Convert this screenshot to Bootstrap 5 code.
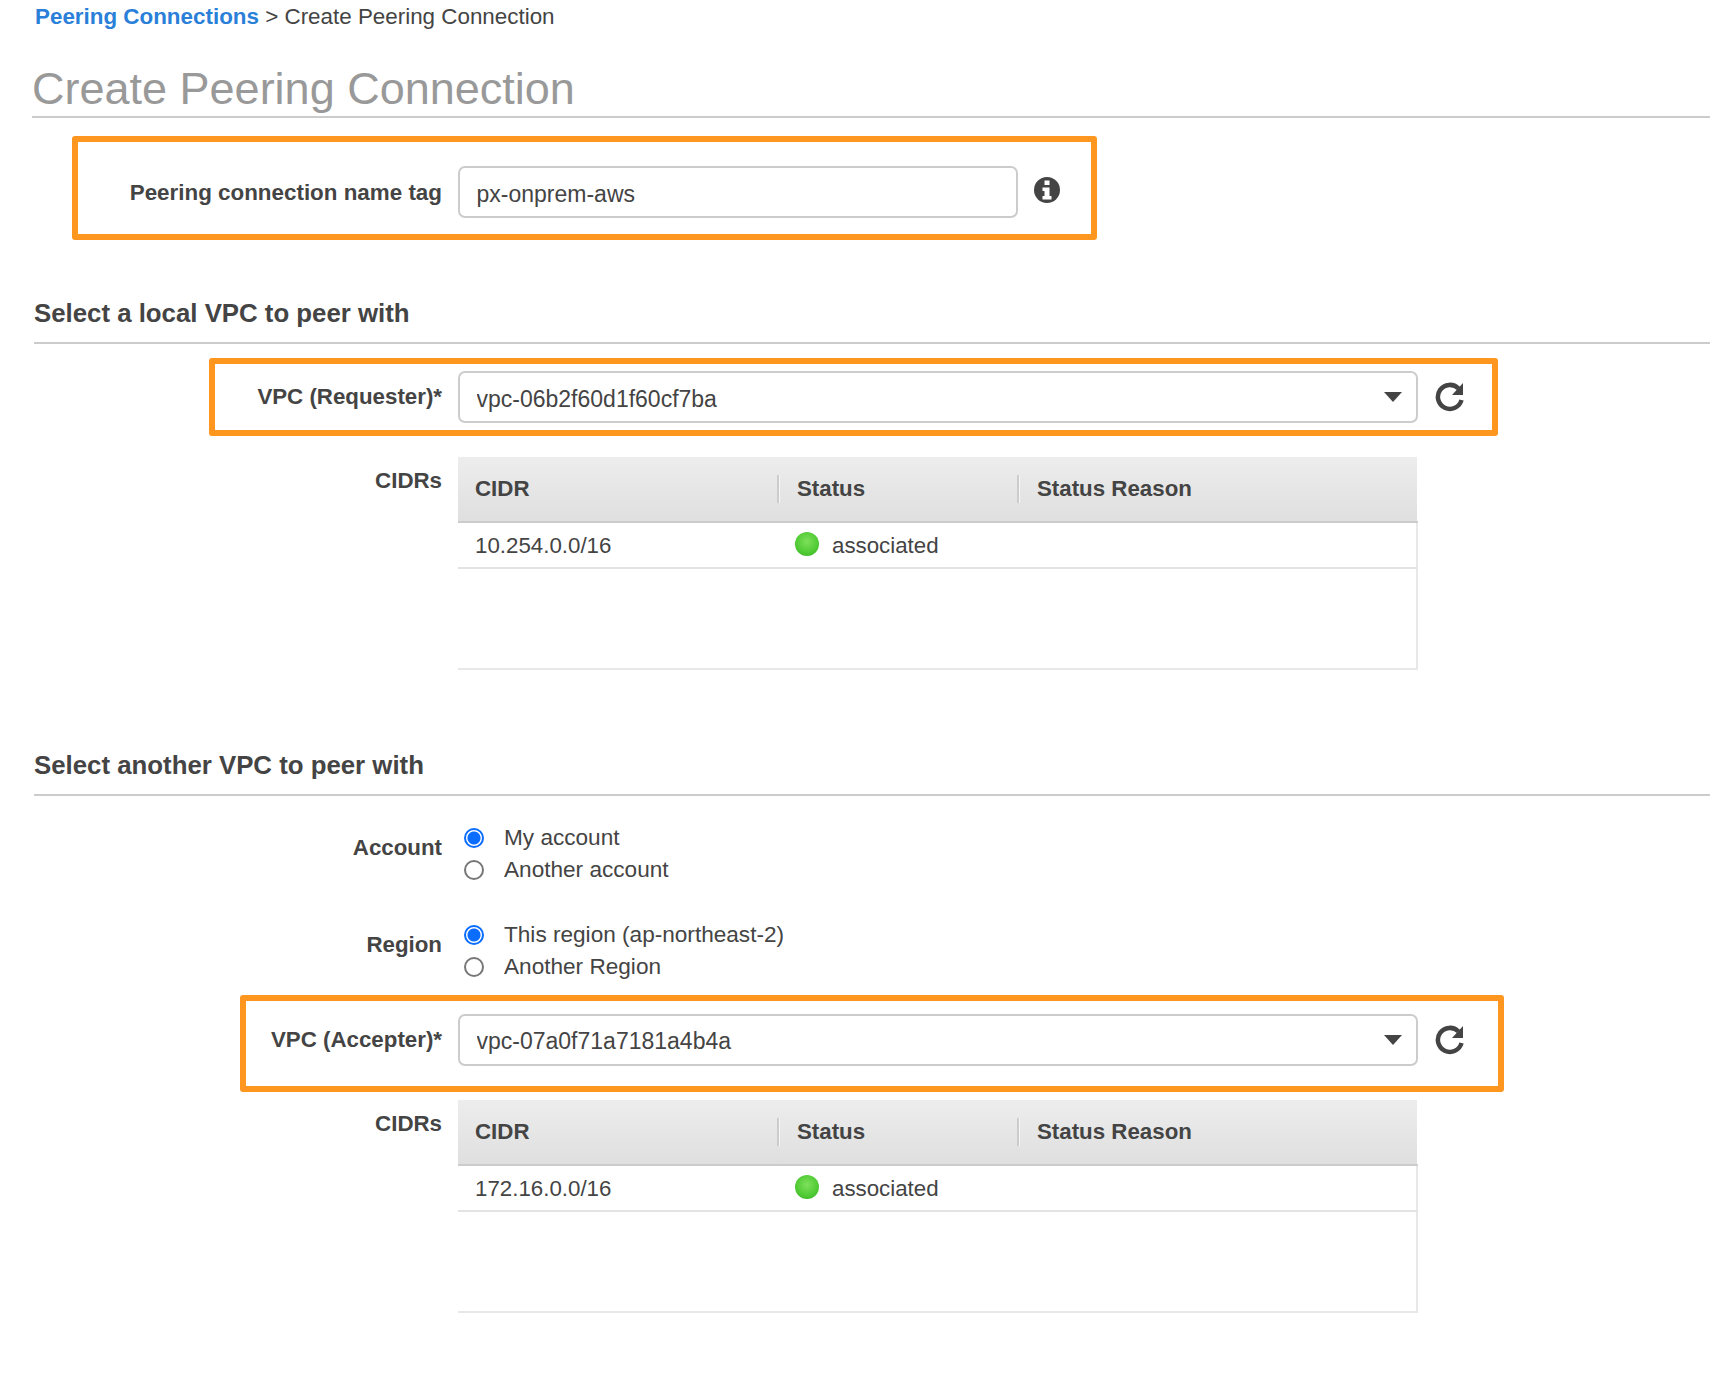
<!doctype html>
<html lang="en">
<head>
<meta charset="utf-8">
<title>Create Peering Connection</title>
<link href="https://cdn.jsdelivr.net/npm/bootstrap@5.3.0/dist/css/bootstrap.min.css" rel="stylesheet">
<style>
body{font-family:"Liberation Sans",Arial,sans-serif;font-size:22.4px;color:#444;background:#fff;overflow-x:hidden;height:1390px}
.crumbs{padding-left:35px;height:33px;line-height:33px;white-space:nowrap}
.crumbs a{color:#2a7fd9;font-weight:700;text-decoration:none}
.page-title{margin:32px 0 0 32px;font-size:45px;line-height:60px;color:#999;font-weight:400;height:59px;border-bottom:2px solid #ccc;white-space:nowrap}
.page-title span{display:block;margin-top:-6px}
.sub-title{margin:0 0 0 34px;font-size:25.8px;font-weight:700;line-height:30px;color:#444;padding-bottom:14px;border-bottom:2px solid #ccc}
.mark-box{border:6px solid #ff9620;border-radius:3px;display:flex;align-items:center}
.box-name{margin:18px 0 0 72px;width:1025px;height:104px;padding-top:7px}
.box-req{margin:14px 0 0 209px;width:1289px;height:78px}
.box-acc{margin:12px 0 0 240px;width:1264px;height:97px;padding-bottom:8px}
.field-label{font-weight:700;text-align:right;white-space:nowrap;color:#444;padding-right:16px;flex:none;font-size:22.3px}
.box-name .field-label{width:380px;padding-top:2px;font-size:22.4px}
.box-req .field-label{width:243px}
.box-acc .field-label{width:212px}
.plain-label{width:458px}
.aws-input{width:560px;height:52px;border:2px solid #ccc;border-radius:7px;font-size:23px;color:#444;padding:5px 16.5px 0;flex:none;box-shadow:none}
.aws-select{width:960px;height:52px;border:2px solid #ccc;border-radius:7px;font-size:23px;color:#444;padding:4px 16.5px 0;flex:none;box-shadow:none;background-color:#fff;background-image:url("data:image/svg+xml,%3Csvg xmlns='http://www.w3.org/2000/svg' viewBox='0 0 18 10'%3E%3Cpath fill='%23444' d='M0 0h18L9 10z'/%3E%3C/svg%3E");background-size:18px 10px;background-position:right 14px center;background-repeat:no-repeat}
.info-icon{width:26px;height:26px;margin-left:16px;margin-top:-4px;flex:none}
.reload-icon{width:30px;height:30px;margin-left:17px;margin-top:0;flex:none}
.cidr-row{display:flex;margin-top:21px}
.cidr-row .field-label{line-height:26px;padding-top:11px}
.cidr-box{width:960px;height:213px;display:flex;flex-direction:column;flex:none}
.cidr-table{width:960px;table-layout:fixed;margin:0;color:#444;--bs-table-bg:transparent}
.cidr-table th{height:65px;padding:0 0 0 17px;font-weight:700;font-size:22.3px;vertical-align:middle;position:relative;border-bottom:2px solid #ccc;background:linear-gradient(#ededed,#dfdfdf);color:#444;white-space:nowrap}
.cidr-table th+th::before{content:"";position:absolute;left:0;top:18px;height:28px;width:2px;background:#ccc;box-shadow:1px 0 0 #f5f5f5}
.cidr-table th+th{padding-left:20px}
.cidr-table td{height:46px;padding:2px 0 0 17px;font-size:22.3px;vertical-align:middle;border-bottom:2px solid #e3e3e3;color:#444}
.cidr-table td+td{padding-left:18px}
.cidr-table td:last-child{border-right:2px solid #e8e8e8}
.cidr-filler{flex:1;border-right:2px solid #e8e8e8;border-bottom:2px solid #e8e8e8}
.status-dot{display:inline-block;width:24px;height:24px;border-radius:50%;background:radial-gradient(circle at 50% 40%,#7ee05a 0,#4fca34 60%,#2fa81c 100%);margin-right:13px;vertical-align:-3px}
.radio-block{display:flex;margin-left:0}
.radio-block .field-label{padding-top:9px}
.radio-stack{padding-left:6px}
.radio-item{display:flex;align-items:center;height:32px;margin:0;padding:0;gap:20px;font-size:22.6px}
.radio-item .form-check-input{width:20px;height:20px;margin:0;float:none;border:2px solid #777;flex:none;background-image:none}
.radio-item .form-check-input:checked{border-color:#0a6dff;background-color:#fff;background-image:radial-gradient(circle,#0a6dff 0 6px,#fff 7px)}
.radio-item .form-check-label{color:#444}
#localHead{margin-top:58px}
#otherHead{margin-top:80px}
#accBlock{margin-top:26px}
#regBlock{margin-top:33px}
#cidr2{margin-top:8px}
</style>
</head>
<body>
<div class="crumbs"><a href="#">Peering Connections</a> &gt; Create Peering Connection</div>
<h1 class="page-title"><span>Create Peering Connection</span></h1>

<div class="mark-box box-name">
  <label class="field-label" for="nameTag">Peering connection name tag</label>
  <input id="nameTag" class="form-control aws-input" type="text" value="px-onprem-aws">
  <svg class="info-icon" viewBox="0 0 26 26" aria-hidden="true"><circle cx="13" cy="13" r="13" fill="#444"/><path fill="#fff" d="M10.500 3.500h5v4.500h-5zM8.500 10.500h7v8.500h2v3.500h-9V19h2v-5h-2z"/></svg>
</div>

<h2 class="sub-title" id="localHead">Select a local VPC to peer with</h2>

<div class="mark-box box-req">
  <label class="field-label" for="reqVpc">VPC (Requester)*</label>
  <select id="reqVpc" class="form-select aws-select"><option>vpc-06b2f60d1f60cf7ba</option></select>
  <svg class="reload-icon" viewBox="0 0 30 30" aria-hidden="true"><path fill="none" stroke="#444" stroke-width="4.500" d="M23.500 6.500A12 12 0 1 0 26.500 18"/><path fill="#444" d="M28 1v12H17z"/></svg>
</div>

<div class="cidr-row">
  <div class="field-label plain-label">CIDRs</div>
  <div class="cidr-box">
    <table class="table cidr-table">
      <colgroup><col style="width:319px"><col style="width:240px"><col></colgroup>
      <thead><tr><th>CIDR</th><th>Status</th><th>Status Reason</th></tr></thead>
      <tbody><tr><td>10.254.0.0/16</td><td colspan="2"><span class="status-dot"></span>associated</td></tr></tbody>
    </table>
    <div class="cidr-filler"></div>
  </div>
</div>

<h2 class="sub-title" id="otherHead">Select another VPC to peer with</h2>

<div class="radio-block" id="accBlock">
  <div class="field-label plain-label">Account</div>
  <div class="radio-stack">
    <div class="form-check radio-item"><input class="form-check-input" type="radio" name="acct" id="a1" checked><label class="form-check-label" for="a1">My account</label></div>
    <div class="form-check radio-item"><input class="form-check-input" type="radio" name="acct" id="a2"><label class="form-check-label" for="a2">Another account</label></div>
  </div>
</div>
<div class="radio-block" id="regBlock">
  <div class="field-label plain-label">Region</div>
  <div class="radio-stack">
    <div class="form-check radio-item"><input class="form-check-input" type="radio" name="reg" id="r1" checked><label class="form-check-label" for="r1">This region (ap-northeast-2)</label></div>
    <div class="form-check radio-item"><input class="form-check-input" type="radio" name="reg" id="r2"><label class="form-check-label" for="r2">Another Region</label></div>
  </div>
</div>

<div class="mark-box box-acc">
  <label class="field-label" for="accVpc">VPC (Accepter)*</label>
  <select id="accVpc" class="form-select aws-select"><option>vpc-07a0f71a7181a4b4a</option></select>
  <svg class="reload-icon" viewBox="0 0 30 30" aria-hidden="true"><path fill="none" stroke="#444" stroke-width="4.500" d="M23.500 6.500A12 12 0 1 0 26.500 18"/><path fill="#444" d="M28 1v12H17z"/></svg>
</div>

<div class="cidr-row" id="cidr2">
  <div class="field-label plain-label">CIDRs</div>
  <div class="cidr-box">
    <table class="table cidr-table">
      <colgroup><col style="width:319px"><col style="width:240px"><col></colgroup>
      <thead><tr><th>CIDR</th><th>Status</th><th>Status Reason</th></tr></thead>
      <tbody><tr><td>172.16.0.0/16</td><td colspan="2"><span class="status-dot"></span>associated</td></tr></tbody>
    </table>
    <div class="cidr-filler"></div>
  </div>
</div>
</body>
</html>
